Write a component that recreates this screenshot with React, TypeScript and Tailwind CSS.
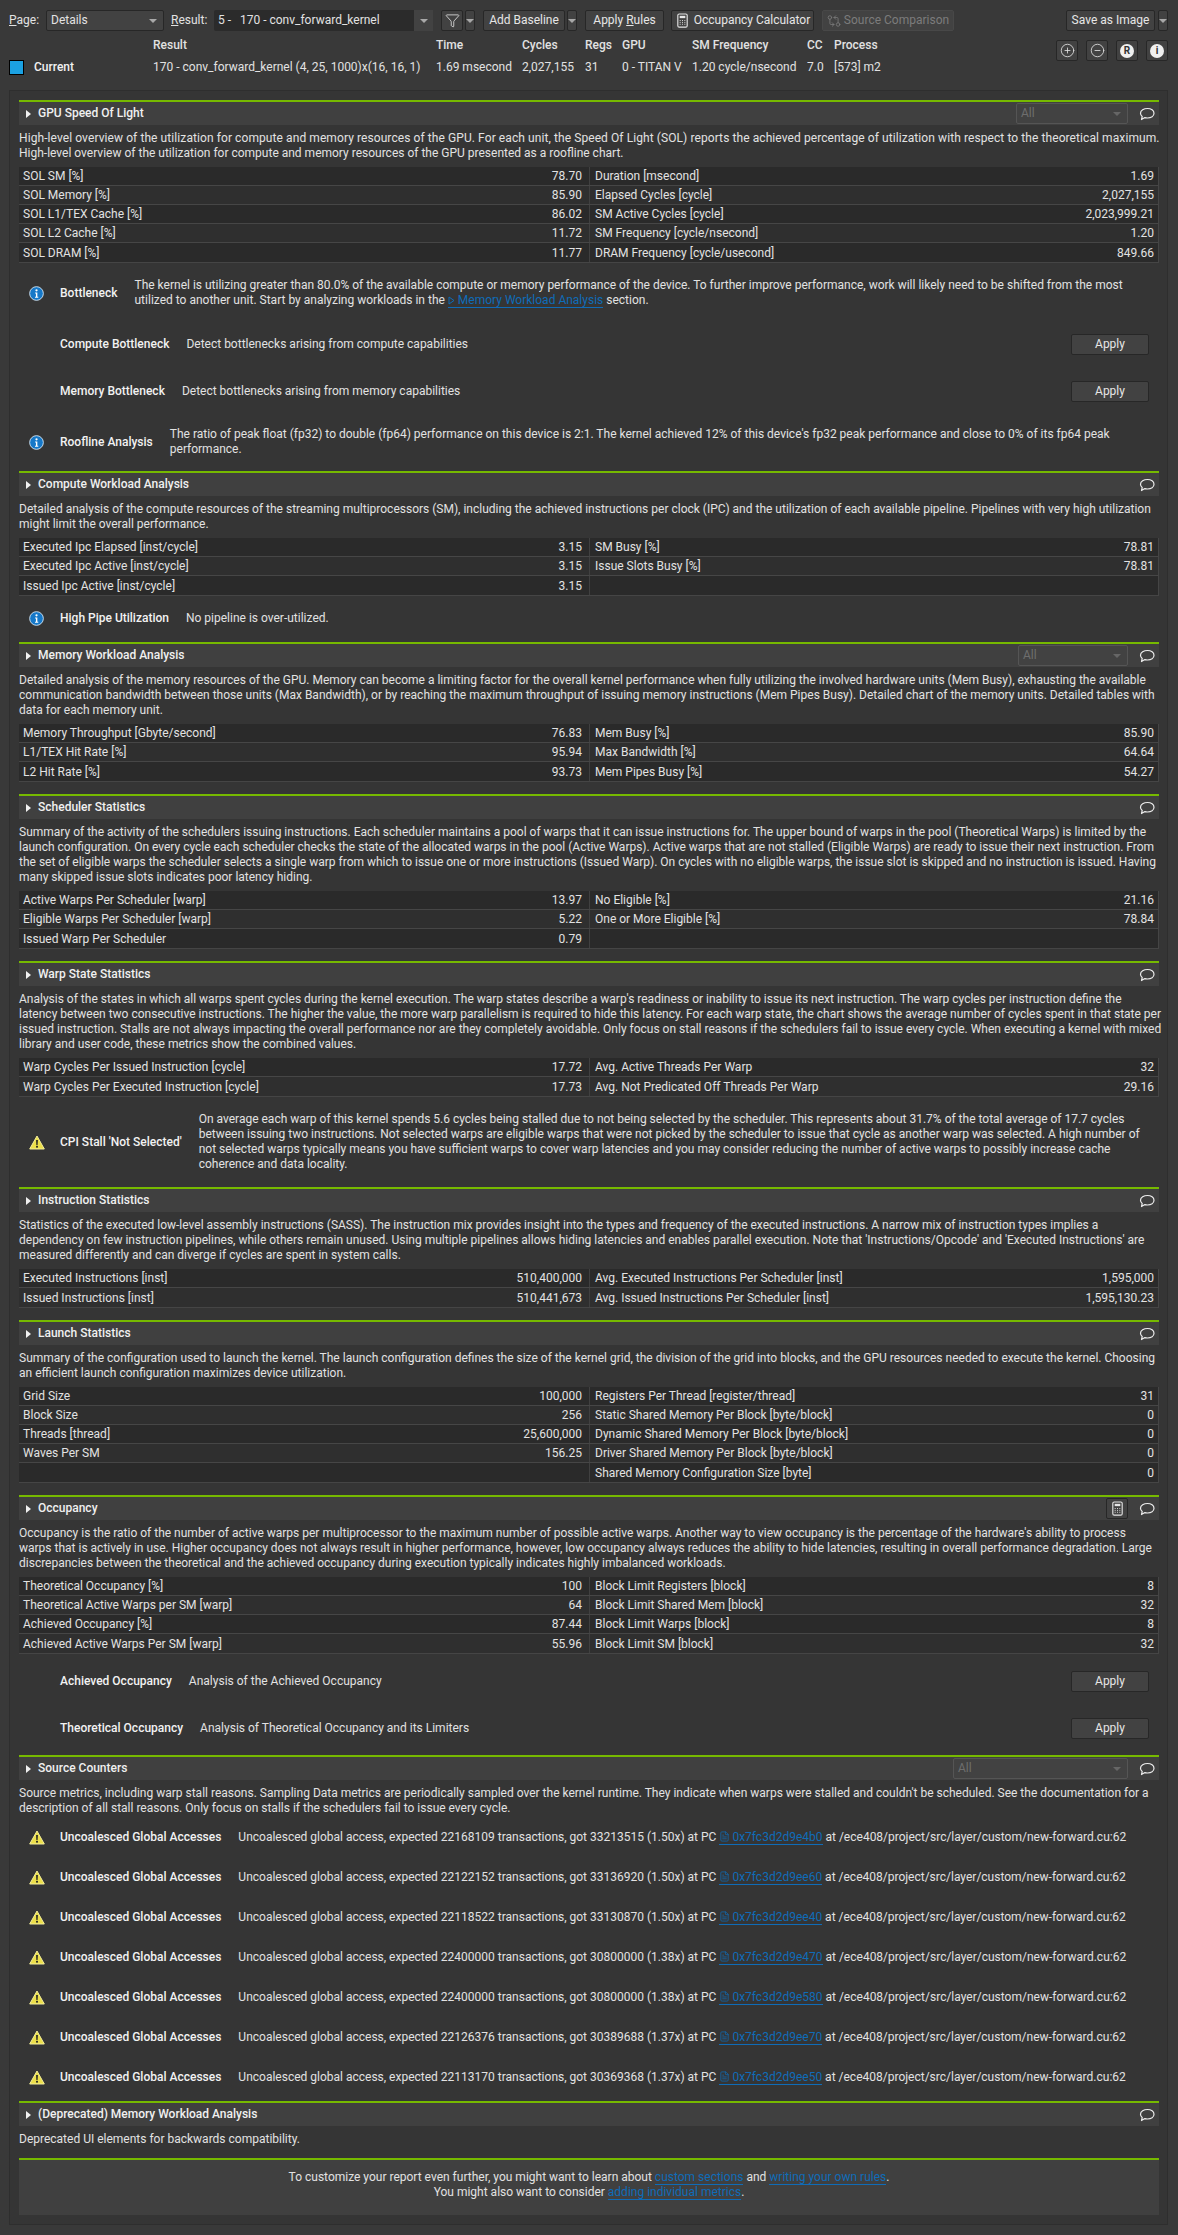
import React from 'react';
import { CircleMinus, CirclePlus, FileText, Filter, GitCompareArrows } from 'lucide-react';

type Row = [string, string, string, string];

const Caret = ({ className = 'border-t-[#a8a8a8]' }: { className?: string }) => (
  <span className={`inline-block h-0 w-0 border-x-[4px] border-t-[4px] border-x-transparent ${className}`} />
);

const Btn = ({ className = '', disabled, children }: { className?: string; disabled?: boolean; children: React.ReactNode }) => (
  <div className={`flex h-[21px] items-center justify-center rounded-[2px] border bg-[#424242] ${disabled ? 'border-[#484848] text-[#7c7c7c]' : 'border-[#272727] text-[#e6e6e6]'} ${className}`}>
    {children}
  </div>
);

const CalcIcon = ({ size = 15 }: { size?: number }) => (
  <svg width={size} height={size} viewBox="0 0 16 16">
    <rect x="3" y="1" width="10" height="14" rx="1.5" fill="none" stroke="#e6e6e6" strokeWidth="1.2" />
    <rect x="5" y="3" width="6" height="2.5" fill="#e6e6e6" />
    <path d="M5 8h1M7.5 8h1M10 8h1M5 10h1M7.5 10h1M10 10h1M5 12h1M7.5 12h1M10 12h1" stroke="#e6e6e6" strokeWidth="1" />
  </svg>
);

const InfoIcon = () => (
  <svg width="15" height="15" viewBox="0 0 16 16" className="shrink-0">
    <circle cx="8" cy="8" r="7.3" fill="#1678c8" stroke="#cfe3f3" strokeWidth="1" />
    <circle cx="8" cy="4.6" r="1.2" fill="#fff" />
    <path d="M6.5 7h2.4v4.4h1v1H6.4v-1h1V8h-.9z" fill="#fff" />
  </svg>
);

const WarnIcon = () => (
  <svg width="16" height="15" viewBox="0 0 16 15" className="shrink-0">
    <path d="M8 1 15.3 14H.7z" fill="#ecdf4a" stroke="#f4ee9a" strokeWidth="1" strokeLinejoin="round" />
    <path d="M7.1 5h1.8l-.3 5H7.4z" fill="#222" />
    <rect x="7.1" y="10.8" width="1.8" height="1.8" fill="#222" />
  </svg>
);

const ChatIcon = () => (
  <svg width="16" height="14" viewBox="0 0 16 14" fill="none" stroke="#ececec" strokeWidth="1.2" strokeLinejoin="round" className="shrink-0">
    <path d="M8.5 1.5c3.6 0 6.5 2 6.5 4.8S12.1 11 8.5 11c-.9 0-1.8-.1-2.6-.4L2.5 12.5l.7-3C2 8.6 1.5 7.5 1.5 6.3 1.5 3.5 4.9 1.5 8.5 1.5z" />
  </svg>
);

const FilledCircle = ({ label }: { label: string }) => (
  <div className="flex h-[14px] w-[14px] items-center justify-center rounded-full bg-[#f0f0f0] text-[10px] leading-none font-bold text-[#333]">
    {label}
  </div>
);

const A = ({ children }: { children: React.ReactNode }) => (
  <span className="border-b border-[#0f6cb8] text-[#0f6cb8]">{children}</span>
);

const SectionHeader = ({ title, select, calc }: { title: string; select?: string; calc?: boolean }) => (
  <div>
    <div className="h-[2px] bg-[#76b900]" />
    <div className="flex h-[23px] items-center bg-[#404040] pr-[4px]">
      <span className="ml-[7px] inline-block h-0 w-0 border-y-[4px] border-l-[5px] border-y-transparent border-l-[#f0f0f0]" />
      <span className="ml-[7px] font-medium text-[#f0f0f0]">{title}</span>
      <div className="ml-auto flex items-center gap-[11px]">
        {select && (
          <div className={`flex h-[21px] items-center justify-between rounded-[2px] border border-[#555] bg-[#424242] pr-[6px] pl-[4px] text-[#6e6e6e] ${select}`}>
            All
            <Caret className="border-t-[#666]" />
          </div>
        )}
        {calc && (
          <Btn className="w-[22px]">
            <CalcIcon />
          </Btn>
        )}
        <ChatIcon />
      </div>
    </div>
  </div>
);

const Lines = ({ lines, className = 'mt-[6px]' }: { lines: React.ReactNode[]; className?: string }) => (
  <div className={className}>
    {lines.map((l, i) => (
      <div key={i} className="h-[15px] whitespace-nowrap">
        {l}
      </div>
    ))}
  </div>
);

const Table = ({ rows }: { rows: Row[] }) => (
  <div className="mt-[6px] border-r border-b border-[#454545]">
    {rows.map((r, i) => (
      <div key={i} className={`flex h-[19px] items-center border-b border-[#464646] last:border-b-0 ${i % 2 === 0 ? 'bg-[#2a2a2a]' : 'bg-[#2f2f2f]'}`}>
        <div className="flex h-full w-[571px] items-center justify-between border-r border-[#404040] pt-px pr-[7px] pl-[4px]">
          <span>{r[0]}</span>
          <span>{r[1]}</span>
        </div>
        <div className="flex h-full flex-1 items-center justify-between pt-px pr-[4px] pl-[5px]">
          <span>{r[2]}</span>
          <span>{r[3]}</span>
        </div>
      </div>
    ))}
  </div>
);

const Rule = ({ icon, title, lines, button, className = '' }: { icon?: 'info' | 'warn'; title: string; lines: React.ReactNode[]; button?: boolean; className?: string }) => (
  <div className={`flex items-center ${className}`}>
    <div className="flex w-[41px] shrink-0 items-center pl-[10px]">
      {icon === 'info' && <InfoIcon />}
      {icon === 'warn' && <WarnIcon />}
    </div>
    <div className="shrink-0 font-medium whitespace-nowrap text-[#f2f2f2]">{title}</div>
    <Lines className="ml-[17px]" lines={lines} />
    {button && <Btn className="mr-[10px] ml-auto w-[78px]">Apply</Btn>}
  </div>
);

const sources: [string, string, string, string][] = [
  ['22168109', '33213515', '1.50x', '0x7fc3d2d9e4b0'],
  ['22122152', '33136920', '1.50x', '0x7fc3d2d9ee60'],
  ['22118522', '33130870', '1.50x', '0x7fc3d2d9ee40'],
  ['22400000', '30800000', '1.38x', '0x7fc3d2d9e470'],
  ['22400000', '30800000', '1.38x', '0x7fc3d2d9e580'],
  ['22126376', '30389688', '1.37x', '0x7fc3d2d9ee70'],
  ['22113170', '30369368', '1.37x', '0x7fc3d2d9ee50'],
];

export default function App() {
  return (
    <div className="h-[2235px] overflow-hidden bg-[#393939] pt-[10px] text-[12px] leading-[15px] text-[#e2e2e2]" style={{ fontFamily: 'Roboto, sans-serif' }}>
      {/* toolbar */}
      <div className="flex h-[21px] items-center pl-[9px]">
        <span className="w-[37px]"><u>P</u>age:</span>
        <div className="flex h-[21px] w-[118px] items-center justify-between rounded-[2px] border border-[#272727] bg-[#424242] pr-[6px] pl-[4px]">
          Details
          <Caret />
        </div>
        <span className="ml-[7px] w-[43px]"><u>R</u>esult:</span>
        <div className="flex h-[21px] w-[219px] items-center rounded-[2px] bg-[#2b2b2b]">
          <span className="ml-[4px] flex-1 whitespace-pre">5 -   170 - conv_forward_kernel</span>
          <div className="flex h-full w-[19px] items-center justify-center bg-[#424242]"><Caret /></div>
        </div>
        <Btn className="ml-[8px] w-[22px]"><Filter size={15} strokeWidth={1.3} /></Btn>
        <Btn className="ml-[2px] w-[10px]"><Caret /></Btn>
        <Btn className="ml-[8px] w-[82px]">Add Baseline</Btn>
        <Btn className="ml-[2px] w-[10px]"><Caret /></Btn>
        <Btn className="ml-[8px] w-[79px]">Apply&nbsp;<u>R</u>ules</Btn>
        <Btn className="ml-[7px] w-[143px] gap-[4px]"><CalcIcon />Occupancy Calculator</Btn>
        <Btn disabled className="ml-[8px] w-[132px] gap-[3px]"><GitCompareArrows size={14} strokeWidth={1.4} />Source Comparison</Btn>
        <Btn className="ml-auto w-[89px]">Save as Image</Btn>
        <Btn className="mr-[10px] ml-[3px] w-[10px]"><Caret /></Btn>
      </div>
      {/* current result */}
      <div className="mt-[6px] flex pl-[9px]">
        <div className="grid flex-1 grid-cols-[144px_283px_86px_63px_37px_70px_115px_27px_1fr] grid-rows-[16px_28px] items-center">
          <span />
          <span className="font-medium">Result</span>
          <span className="font-medium">Time</span>
          <span className="font-medium">Cycles</span>
          <span className="font-medium">Regs</span>
          <span className="font-medium">GPU</span>
          <span className="font-medium">SM Frequency</span>
          <span className="font-medium">CC</span>
          <span className="font-medium">Process</span>
          <div className="flex items-center gap-[10px]">
            <div className="h-[15px] w-[15px] border border-black bg-[#1ba1e2]" />
            <span className="font-medium text-[#f2f2f2]">Current</span>
          </div>
          <span>170 - conv_forward_kernel (4, 25, 1000)x(16, 16, 1)</span>
          <span>1.69 msecond</span>
          <span>2,027,155</span>
          <span>31</span>
          <span>0 - TITAN V</span>
          <span>1.20 cycle/nsecond</span>
          <span>7.0</span>
          <span>[573] m2</span>
        </div>
        <div className="mt-[3px] mr-[10px] flex h-[21px] gap-[8px]">
          <Btn className="w-[22px]"><CirclePlus size={15} strokeWidth={1.3} /></Btn>
          <Btn className="w-[22px]"><CircleMinus size={15} strokeWidth={1.3} /></Btn>
          <Btn className="w-[22px]"><FilledCircle label="R" /></Btn>
          <Btn className="w-[22px]"><FilledCircle label="i" /></Btn>
        </div>
      </div>

      {/* report */}
      <div className="mt-[9px] mr-[10px] ml-[9px] h-[2135px] border border-[#2e2e2e] bg-[#353535] pt-[9px] pr-[8px] pl-[9px]">
        <section>
          <SectionHeader title="GPU Speed Of Light" select="w-[112px]" />
          <Lines lines={[
            <span className="tracking-[0.085px]">High-level overview of the utilization for compute and memory resources of the GPU. For each unit, the Speed Of Light (SOL) reports the achieved percentage of utilization with respect to the theoretical maximum.</span>,
            'High-level overview of the utilization for compute and memory resources of the GPU presented as a roofline chart.',
          ]} />
          <Table rows={[
            ['SOL SM [%]', '78.70', 'Duration [msecond]', '1.69'],
            ['SOL Memory [%]', '85.90', 'Elapsed Cycles [cycle]', '2,027,155'],
            ['SOL L1/TEX Cache [%]', '86.02', 'SM Active Cycles [cycle]', '2,023,999.21'],
            ['SOL L2 Cache [%]', '11.72', 'SM Frequency [cycle/nsecond]', '1.20'],
            ['SOL DRAM [%]', '11.77', 'DRAM Frequency [cycle/usecond]', '849.66'],
          ]} />
          <Rule className="mt-[15px]" icon="info" title="Bottleneck" lines={[
            'The kernel is utilizing greater than 80.0% of the available compute or memory performance of the device. To further improve performance, work will likely need to be shifted from the most',
            <>utilized to another unit. Start by analyzing workloads in the <A><svg width="7" height="9" viewBox="0 0 7 9" className="mr-[3px] inline-block"><path d="M1 1l5 3.5L1 8z" fill="none" stroke="#0f6cb8" /></svg>Memory Workload Analysis</A> section.</>,
          ]} />
          <Rule className="mt-[26px]" title="Compute Bottleneck" lines={['Detect bottlenecks arising from compute capabilities']} button />
          <Rule className="mt-[26px]" title="Memory Bottleneck" lines={['Detect bottlenecks arising from memory capabilities']} button />
          <Rule className="mt-[25px]" icon="info" title="Roofline Analysis" lines={[
            "The ratio of peak float (fp32) to double (fp64) performance on this device is 2:1. The kernel achieved 12% of this device's fp32 peak performance and close to 0% of its fp64 peak",
            'performance.',
          ]} />
        </section>

        <section className="mt-[14px]">
          <SectionHeader title="Compute Workload Analysis" />
          <Lines lines={[
            'Detailed analysis of the compute resources of the streaming multiprocessors (SM), including the achieved instructions per clock (IPC) and the utilization of each available pipeline. Pipelines with very high utilization',
            'might limit the overall performance.',
          ]} />
          <Table rows={[
            ['Executed Ipc Elapsed [inst/cycle]', '3.15', 'SM Busy [%]', '78.81'],
            ['Executed Ipc Active [inst/cycle]', '3.15', 'Issue Slots Busy [%]', '78.81'],
            ['Issued Ipc Active [inst/cycle]', '3.15', '', ''],
          ]} />
          <Rule className="mt-[15px]" icon="info" title="High Pipe Utilization" lines={['No pipeline is over-utilized.']} />
        </section>

        <section className="mt-[16px]">
          <SectionHeader title="Memory Workload Analysis" select="w-[110px]" />
          <Lines lines={[
            'Detailed analysis of the memory resources of the GPU. Memory can become a limiting factor for the overall kernel performance when fully utilizing the involved hardware units (Mem Busy), exhausting the available',
            'communication bandwidth between those units (Max Bandwidth), or by reaching the maximum throughput of issuing memory instructions (Mem Pipes Busy). Detailed chart of the memory units. Detailed tables with',
            'data for each memory unit.',
          ]} />
          <Table rows={[
            ['Memory Throughput [Gbyte/second]', '76.83', 'Mem Busy [%]', '85.90'],
            ['L1/TEX Hit Rate [%]', '95.94', 'Max Bandwidth [%]', '64.64'],
            ['L2 Hit Rate [%]', '93.73', 'Mem Pipes Busy [%]', '54.27'],
          ]} />
        </section>

        <section className="mt-[12px]">
          <SectionHeader title="Scheduler Statistics" />
          <Lines lines={[
            'Summary of the activity of the schedulers issuing instructions. Each scheduler maintains a pool of warps that it can issue instructions for. The upper bound of warps in the pool (Theoretical Warps) is limited by the',
            'launch configuration. On every cycle each scheduler checks the state of the allocated warps in the pool (Active Warps). Active warps that are not stalled (Eligible Warps) are ready to issue their next instruction. From',
            'the set of eligible warps the scheduler selects a single warp from which to issue one or more instructions (Issued Warp). On cycles with no eligible warps, the issue slot is skipped and no instruction is issued. Having',
            'many skipped issue slots indicates poor latency hiding.',
          ]} />
          <Table rows={[
            ['Active Warps Per Scheduler [warp]', '13.97', 'No Eligible [%]', '21.16'],
            ['Eligible Warps Per Scheduler [warp]', '5.22', 'One or More Eligible [%]', '78.84'],
            ['Issued Warp Per Scheduler', '0.79', '', ''],
          ]} />
        </section>

        <section className="mt-[12px]">
          <SectionHeader title="Warp State Statistics" />
          <Lines lines={[
            "Analysis of the states in which all warps spent cycles during the kernel execution. The warp states describe a warp's readiness or inability to issue its next instruction. The warp cycles per instruction define the",
            'latency between two consecutive instructions. The higher the value, the more warp parallelism is required to hide this latency. For each warp state, the chart shows the average number of cycles spent in that state per',
            'issued instruction. Stalls are not always impacting the overall performance nor are they completely avoidable. Only focus on stall reasons if the schedulers fail to issue every cycle. When executing a kernel with mixed',
            'library and user code, these metrics show the combined values.',
          ]} />
          <Table rows={[
            ['Warp Cycles Per Issued Instruction [cycle]', '17.72', 'Avg. Active Threads Per Warp', '32'],
            ['Warp Cycles Per Executed Instruction [cycle]', '17.73', 'Avg. Not Predicated Off Threads Per Warp', '29.16'],
          ]} />
          <Rule className="mt-[15px]" icon="warn" title="CPI Stall 'Not Selected'" lines={[
            'On average each warp of this kernel spends 5.6 cycles being stalled due to not being selected by the scheduler. This represents about 31.7% of the total average of 17.7 cycles',
            'between issuing two instructions. Not selected warps are eligible warps that were not picked by the scheduler to issue that cycle as another warp was selected. A high number of',
            'not selected warps typically means you have sufficient warps to cover warp latencies and you may consider reducing the number of active warps to possibly increase cache',
            'coherence and data locality.',
          ]} />
        </section>

        <section className="mt-[15px]">
          <SectionHeader title="Instruction Statistics" />
          <Lines lines={[
            'Statistics of the executed low-level assembly instructions (SASS). The instruction mix provides insight into the types and frequency of the executed instructions. A narrow mix of instruction types implies a',
            "dependency on few instruction pipelines, while others remain unused. Using multiple pipelines allows hiding latencies and enables parallel execution. Note that 'Instructions/Opcode' and 'Executed Instructions' are",
            'measured differently and can diverge if cycles are spent in system calls.',
          ]} />
          <Table rows={[
            ['Executed Instructions [inst]', '510,400,000', 'Avg. Executed Instructions Per Scheduler [inst]', '1,595,000'],
            ['Issued Instructions [inst]', '510,441,673', 'Avg. Issued Instructions Per Scheduler [inst]', '1,595,130.23'],
          ]} />
        </section>

        <section className="mt-[12px]">
          <SectionHeader title="Launch Statistics" />
          <Lines lines={[
            'Summary of the configuration used to launch the kernel. The launch configuration defines the size of the kernel grid, the division of the grid into blocks, and the GPU resources needed to execute the kernel. Choosing',
            'an efficient launch configuration maximizes device utilization.',
          ]} />
          <Table rows={[
            ['Grid Size', '100,000', 'Registers Per Thread [register/thread]', '31'],
            ['Block Size', '256', 'Static Shared Memory Per Block [byte/block]', '0'],
            ['Threads [thread]', '25,600,000', 'Dynamic Shared Memory Per Block [byte/block]', '0'],
            ['Waves Per SM', '156.25', 'Driver Shared Memory Per Block [byte/block]', '0'],
            ['', '', 'Shared Memory Configuration Size [byte]', '0'],
          ]} />
        </section>

        <section className="mt-[12px]">
          <SectionHeader title="Occupancy" calc />
          <Lines lines={[
            "Occupancy is the ratio of the number of active warps per multiprocessor to the maximum number of possible active warps. Another way to view occupancy is the percentage of the hardware's ability to process",
            'warps that is actively in use. Higher occupancy does not always result in higher performance, however, low occupancy always reduces the ability to hide latencies, resulting in overall performance degradation. Large',
            'discrepancies between the theoretical and the achieved occupancy during execution typically indicates highly imbalanced workloads.',
          ]} />
          <Table rows={[
            ['Theoretical Occupancy [%]', '100', 'Block Limit Registers [block]', '8'],
            ['Theoretical Active Warps per SM [warp]', '64', 'Block Limit Shared Mem [block]', '32'],
            ['Achieved Occupancy [%]', '87.44', 'Block Limit Warps [block]', '8'],
            ['Achieved Active Warps Per SM [warp]', '55.96', 'Block Limit SM [block]', '32'],
          ]} />
          <Rule className="mt-[17px]" title="Achieved Occupancy" lines={['Analysis of the Achieved Occupancy']} button />
          <Rule className="mt-[26px]" title="Theoretical Occupancy" lines={['Analysis of Theoretical Occupancy and its Limiters']} button />
        </section>

        <section className="mt-[16px]">
          <SectionHeader title="Source Counters" select="w-[175px]" />
          <Lines lines={[
            "Source metrics, including warp stall reasons. Sampling Data metrics are periodically sampled over the kernel runtime. They indicate when warps were stalled and couldn't be scheduled. See the documentation for a",
            'description of all stall reasons. Only focus on stalls if the schedulers fail to issue every cycle.',
          ]} />
          <div className="mt-[14px] flex flex-col gap-[25px]">
            {sources.map(([expected, got, ratio, pc]) => (
              <Rule key={pc} icon="warn" title="Uncoalesced Global Accesses" lines={[
                <>Uncoalesced global access, expected {expected} transactions, got {got} ({ratio}) at PC <A><FileText size={11} strokeWidth={1.6} className="mr-[2px] inline-block align-[-1px]" />{pc}</A> at /ece408/project/src/layer/custom/new-forward.cu:62</>,
              ]} />
            ))}
          </div>
        </section>

        <section className="mt-[16px]">
          <SectionHeader title="(Deprecated) Memory Workload Analysis" />
          <Lines lines={['Deprecated UI elements for backwards compatibility.']} />
        </section>

        <div className="mt-[11px] border-t-2 border-[#76b900] bg-[#404040] pt-[10px] pb-[15px] text-center">
          <div>To customize your report even further, you might want to learn about <A>custom sections</A> and <A>writing your own rules</A>.</div>
          <div>You might also want to consider <A>adding individual metrics</A>.</div>
        </div>
      </div>
    </div>
  );
}
